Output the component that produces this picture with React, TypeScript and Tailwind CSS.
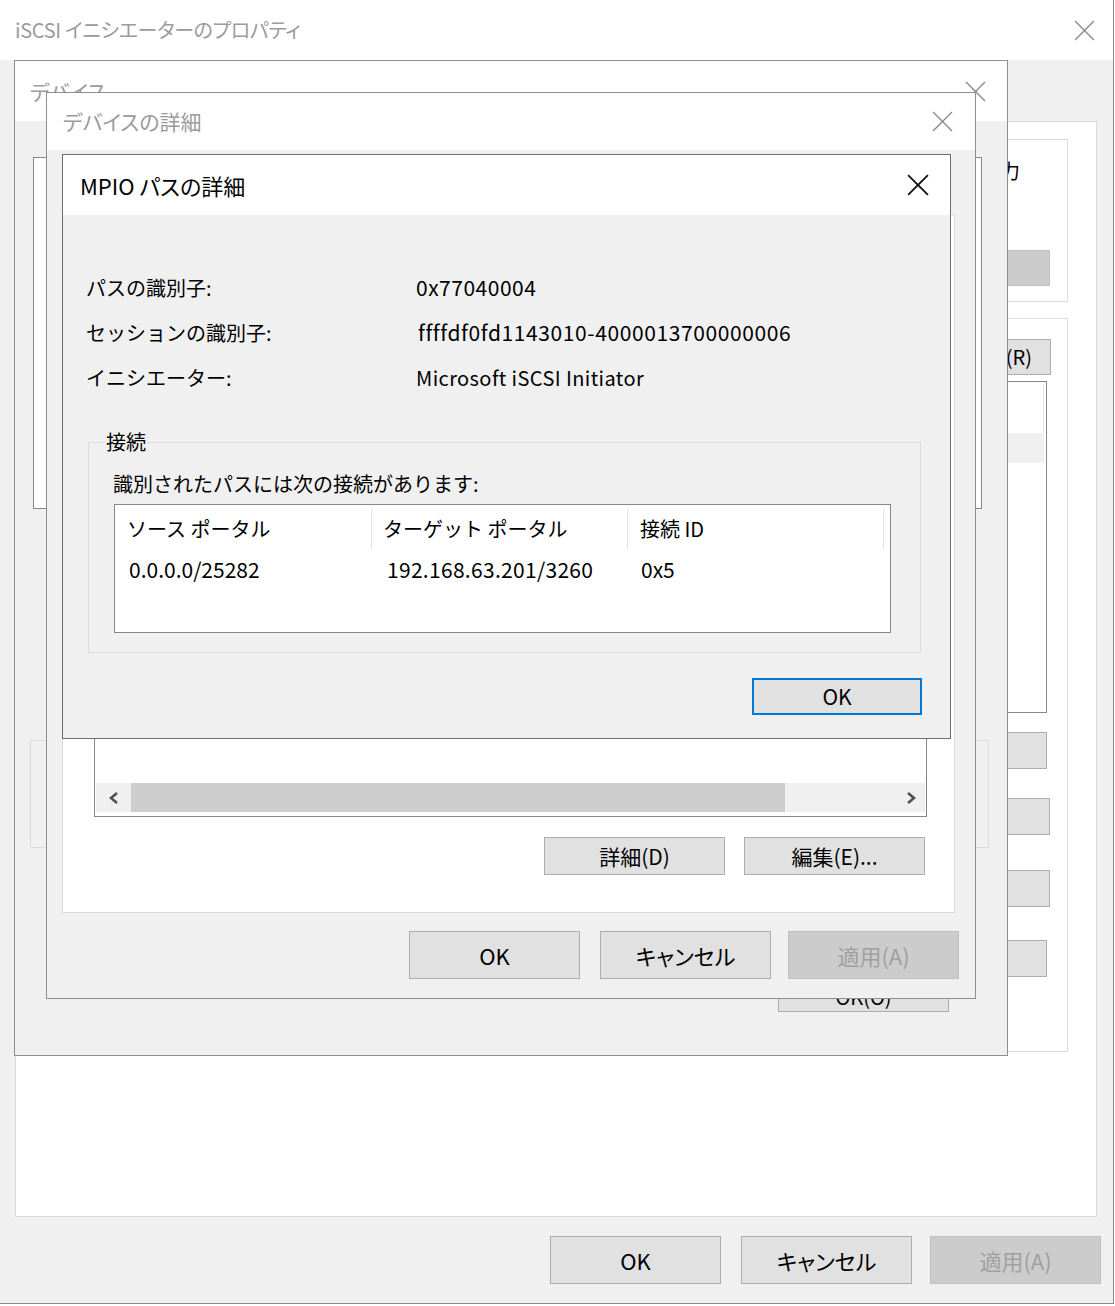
import React from "react";

function XIcon({ color, stroke, size }: { color: string; stroke: number; size: number }) {
  return (
    <svg width={size} height={size} viewBox="0 0 20 20" className="shrink-0">
      <line x1="1" y1="1" x2="19" y2="19" stroke={color} strokeWidth={stroke} />
      <line x1="19" y1="1" x2="1" y2="19" stroke={color} strokeWidth={stroke} />
    </svg>
  );
}

function Chevron({ dir }: { dir: "left" | "right" }) {
  return (
    <svg width="12" height="14" viewBox="0 0 12 14">
      {dir === "left" ? (
        <polyline points="9,2 3,7 9,12" fill="none" stroke="#505050" strokeWidth="2.6" />
      ) : (
        <polyline points="3,2 9,7 3,12" fill="none" stroke="#505050" strokeWidth="2.6" />
      )}
    </svg>
  );
}

export default function App() {
  return (
    <div className="relative h-[1306px] w-[1115px] overflow-hidden bg-white font-['Noto_Sans_CJK_JP',sans-serif] text-black">
      {/* Outer window: iSCSI イニシエーターのプロパティ */}
      <div className="flex h-[1304px] w-[1114px] flex-col border-r border-b border-[#8a8a8a] bg-[#f0f0f0]">
        <div className="flex h-[60px] shrink-0 items-center justify-between bg-white pl-[15px] pr-[18px]">
          <span className="text-[20px] leading-none tracking-[-0.3px] text-[#9b9b9b] [font-feature-settings:'palt']">
            iSCSI イニシエーターのプロパティ
          </span>
          <XIcon color="#8a8a8a" stroke={1.3} size={21} />
        </div>
        <div className="flex flex-col pl-[15px] pt-[61px]">
          <div className="flex h-[1096px] w-[1082px] flex-col items-end border border-[#d9d9d9] bg-white pr-[28px] pt-[17px]">
            {/* group box 1 */}
            <div className="flex h-[163px] w-[400px] flex-col border border-[#dcdcdc]">
              <div className="flex justify-end pr-[47px] pt-[20px] text-[20px] leading-[22px]">ターゲット名を入力</div>
              <div className="mr-[17px] mt-[68px] h-[36px] w-[170px] self-end border border-[#bfbfbf] bg-[#cccccc]" />
            </div>
            {/* group box 2 */}
            <div className="mt-[16px] flex h-[734px] w-[400px] flex-col items-end border border-[#dcdcdc] pt-[20px]">
              <div className="mr-[16px] flex h-[36px] w-[170px] items-center justify-end border border-[#adadad] bg-[#e1e1e1] pr-[18px] text-[20px] leading-none">
                更新(R)
              </div>
              <div className="mr-[20px] mt-[6px] flex h-[332px] w-[300px] flex-col border border-[#828790] bg-white p-[2px]">
                <div className="h-[49px] border-r border-[#e5e5e5]" />
                <div className="h-[30px] bg-[#f0f0f0]" />
              </div>
              <div className="mr-[20px] mt-[19px] h-[37px] w-[170px] border border-[#adadad] bg-[#e1e1e1]" />
              <div className="mr-[17px] mt-[29px] h-[37px] w-[170px] border border-[#adadad] bg-[#e1e1e1]" />
              <div className="mr-[17px] mt-[35px] h-[37px] w-[170px] border border-[#adadad] bg-[#e1e1e1]" />
              <div className="mr-[20px] mt-[33px] h-[37px] w-[170px] border border-[#adadad] bg-[#e1e1e1]" />
            </div>
          </div>
          <div className="mt-[19px] flex justify-end pr-[12px]">
            <div className="mr-[20px] flex h-[48px] w-[171px] items-center justify-center border border-[#adadad] bg-[#e1e1e1] text-[22px] leading-none">OK</div>
            <div className="mr-[18px] flex h-[48px] w-[171px] items-center justify-center border border-[#adadad] bg-[#e1e1e1] text-[22px] leading-none [font-feature-settings:'palt']">キャンセル</div>
            <div className="flex h-[48px] w-[171px] items-center justify-center border border-[#bfbfbf] bg-[#cccccc] text-[22px] leading-none text-[#a0a0a0] [font-feature-settings:'palt']">適用(A)</div>
          </div>
        </div>
      </div>

      {/* デバイス window */}
      <div className="absolute left-[14px] top-[60px] flex h-[996px] w-[994px] flex-col border border-[#8f8f8f] bg-[#f0f0f0]">
        <div className="flex h-[60px] shrink-0 items-center justify-between bg-white pl-[15px] pr-[21px]">
          <span className="text-[21px] leading-none text-[#9b9b9b] [font-feature-settings:'palt']">デバイス</span>
          <XIcon color="#8a8a8a" stroke={1.3} size={21} />
        </div>
        <div className="flex flex-1 flex-col">
          <div className="ml-[18px] mt-[36px] h-[352px] w-[949px] border border-[#828790] bg-white" />
          <div className="ml-[15px] mt-[231px] h-[108px] w-[959px] border border-[#dcdcdc]" />
          <div className="mr-[58px] mt-[127px] flex h-[37px] w-[171px] items-end justify-center self-end border border-[#adadad] bg-[#e1e1e1] pb-[4px] text-[20px] leading-none">
            OK(O)
          </div>
        </div>
      </div>

      {/* デバイスの詳細 window */}
      <div className="absolute left-[46px] top-[92px] flex h-[907px] w-[930px] flex-col border border-[#8f8f8f] bg-[#f0f0f0]">
        <div className="flex h-[57px] shrink-0 items-center justify-between bg-white pl-[16px] pr-[22px]">
          <span className="text-[21px] leading-none text-[#9b9b9b] [font-feature-settings:'palt']">デバイスの詳細</span>
          <XIcon color="#8a8a8a" stroke={1.3} size={21} />
        </div>
        <div className="flex flex-1 flex-col">
          <div className="ml-[15px] mt-[64px] flex h-[699px] w-[893px] flex-col border border-[#d9d9d9] bg-white">
            <div className="ml-[31px] mt-[35px] flex h-[567px] w-[833px] flex-col justify-end border border-[#828790] bg-white px-[1px] pb-[4px]">
              <div className="flex h-[29px] bg-[#f0f0f0]">
                <div className="flex w-[35px] items-center justify-center">
                  <Chevron dir="left" />
                </div>
                <div className="w-[654px] bg-[#cdcdcd]" />
                <div className="flex flex-1 items-center justify-end pr-[8px]">
                  <Chevron dir="right" />
                </div>
              </div>
            </div>
            <div className="mr-[29px] mt-[20px] flex justify-end gap-[19px]">
              <div className="flex h-[38px] w-[181px] items-center justify-center border border-[#adadad] bg-[#e1e1e1] text-[21px] leading-none">詳細(D)</div>
              <div className="flex h-[38px] w-[181px] items-center justify-center border border-[#adadad] bg-[#e1e1e1] text-[21px] leading-none">編集(E)...</div>
            </div>
          </div>
          <div className="mr-[16px] mt-[18px] flex justify-end">
            <div className="mr-[20px] flex h-[48px] w-[171px] items-center justify-center border border-[#adadad] bg-[#e1e1e1] text-[22px] leading-none">OK</div>
            <div className="mr-[17px] flex h-[48px] w-[171px] items-center justify-center border border-[#adadad] bg-[#e1e1e1] text-[22px] leading-none [font-feature-settings:'palt']">キャンセル</div>
            <div className="flex h-[48px] w-[171px] items-center justify-center border border-[#bfbfbf] bg-[#cccccc] text-[22px] leading-none text-[#a0a0a0] [font-feature-settings:'palt']">適用(A)</div>
          </div>
        </div>
      </div>

      {/* MPIO パスの詳細 window */}
      <div className="absolute left-[62px] top-[154px] flex h-[585px] w-[889px] flex-col border border-[#6e6e6e] bg-[#f0f0f0]">
        <div className="flex h-[60px] shrink-0 items-center justify-between bg-white pl-[17px] pr-[21px]">
          <span className="text-[22px] leading-none [font-feature-settings:'palt']">MPIO パスの詳細</span>
          <XIcon color="#111111" stroke={1.7} size={22} />
        </div>
        <div className="flex flex-1 flex-col pt-[50px]">
          <div className="flex flex-col pl-[23px] text-[20px]">
            <div className="flex h-[45px] items-center">
              <span className="w-[330px]">パスの識別子:</span>
              <span className="text-[21px] tracking-[0.5px]">0x77040004</span>
            </div>
            <div className="flex h-[45px] items-center">
              <span className="w-[332px]">セッションの識別子:</span>
              <span className="text-[21px] tracking-[0.6px]">ffffdf0fd1143010-4000013700000006</span>
            </div>
            <div className="flex h-[45px] items-center">
              <span className="w-[330px]">イニシエーター:</span>
              <span className="text-[20px] tracking-[0.4px]">Microsoft iSCSI Initiator</span>
            </div>
          </div>
          <div className="relative ml-[25px] mt-[42px] flex h-[211px] w-[833px] flex-col border border-[#dcdcdc]">
            <span className="absolute left-[16px] top-[-14px] bg-[#f0f0f0] px-[1px] text-[20px] leading-[26px]">接続</span>
            <div className="pl-[24px] pt-[29px] text-[20px] leading-[24px]">識別されたパスには次の接続があります:</div>
            <div className="ml-[25px] mt-[8px] flex h-[129px] w-[777px] flex-col border border-[#828790] bg-white text-[20px]">
              <div className="flex h-[47px] items-center pt-[1px]">
                <div className="flex h-[42px] w-[257px] items-center border-r border-[#e5e5e5] pl-[12px]">ソース ポータル</div>
                <div className="flex h-[42px] w-[256px] items-center border-r border-[#e5e5e5] pl-[11px]">ターゲット ポータル</div>
                <div className="flex h-[42px] w-[256px] items-center border-r border-[#e5e5e5] pl-[12px]">接続 ID</div>
              </div>
              <div className="flex h-[36px] items-center text-[21px]">
                <div className="w-[257px] pl-[14px]">0.0.0.0/25282</div>
                <div className="w-[256px] pl-[15px] tracking-[0.3px]">192.168.63.201/3260</div>
                <div className="w-[256px] pl-[13px]">0x5</div>
              </div>
            </div>
          </div>
          <div className="mr-[28px] mt-[25px] flex h-[37px] w-[170px] items-center justify-center self-end border-2 border-[#0078d7] bg-[#e1e1e1] text-[21px] leading-none">
            OK
          </div>
        </div>
      </div>
    </div>
  );
}
